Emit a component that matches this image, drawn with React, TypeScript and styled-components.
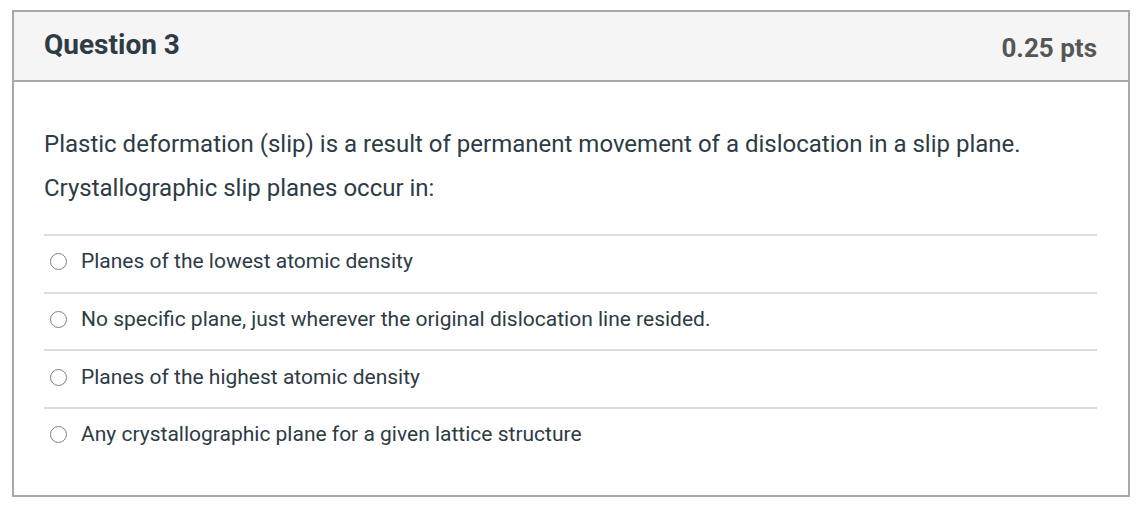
import styled, { createGlobalStyle } from "styled-components";

const GlobalStyle = createGlobalStyle`
  body {
    margin: 0;
    background: #ffffff;
    font-family: Roboto, "Liberation Sans", Arial, sans-serif;
  }
`;

const answers = [
  "Planes of the lowest atomic density",
  "No specific plane, just wherever the original dislocation line resided.",
  "Planes of the highest atomic density",
  "Any crystallographic plane for a given lattice structure",
];

const App = () => {
  return (
    <>
      <GlobalStyle />
      <Page>
        <QuestionCard>
          <Header>
            <Title>Question 3</Title>
            <Points>0.25 pts</Points>
          </Header>
          <Body>
            <QuestionText>
              Plastic deformation (slip) is a result of permanent movement of a
              dislocation in a slip plane.
              <br />
              Crystallographic slip planes occur in:
            </QuestionText>
            <AnswerList>
              {answers.map((a) => (
                <Answer key={a}>
                  <Radio type="radio" name="q3" />
                  <AnswerLabel>{a}</AnswerLabel>
                </Answer>
              ))}
            </AnswerList>
          </Body>
        </QuestionCard>
      </Page>
    </>
  );
};

export default App;

const Page = styled.div`
  padding: 10px 8px 14px 12px;
`;

const QuestionCard = styled.div`
  width: 1118px;
  box-sizing: border-box;
  border: 2px solid #a8a8a8;
  background: #fff;
`;

const Header = styled.div`
  height: 70px;
  box-sizing: border-box;
  display: flex;
  justify-content: space-between;
  align-items: center;
  padding: 0 31px 0 30px;
  background: #f5f5f5;
  border-bottom: 2px solid #a8a8a8;
`;

const Title = styled.h2`
  margin: -4px 0 0;
  font-size: 28px;
  font-weight: 700;
  color: #2d3b45;
`;

const Points = styled.span`
  font-size: 26px;
  font-weight: 700;
  color: #565656;
  margin-top: 4px;
`;

const Body = styled.div`
  padding: 40px 31px 30px 30px;
`;

const QuestionText = styled.div`
  font-size: 24px;
  line-height: 44px;
  color: #2d3b45;
  margin-bottom: 24px;
`;

const AnswerList = styled.div`
  display: flex;
  flex-direction: column;
`;

const Answer = styled.label`
  display: flex;
  align-items: center;
  height: 55.7px;
  border-top: 2px solid #dddddd;
  padding-left: 6px;
`;

const Radio = styled.input`
  appearance: none;
  width: 17px;
  height: 17px;
  margin: -4px 14px 0 0;
  border: 1.5px solid #808080;
  border-radius: 50%;
  box-sizing: border-box;
  background: #fff;
`;

const AnswerLabel = styled.span`
  font-size: 21px;
  color: #2d3b45;
  margin-top: -5px;
`;
